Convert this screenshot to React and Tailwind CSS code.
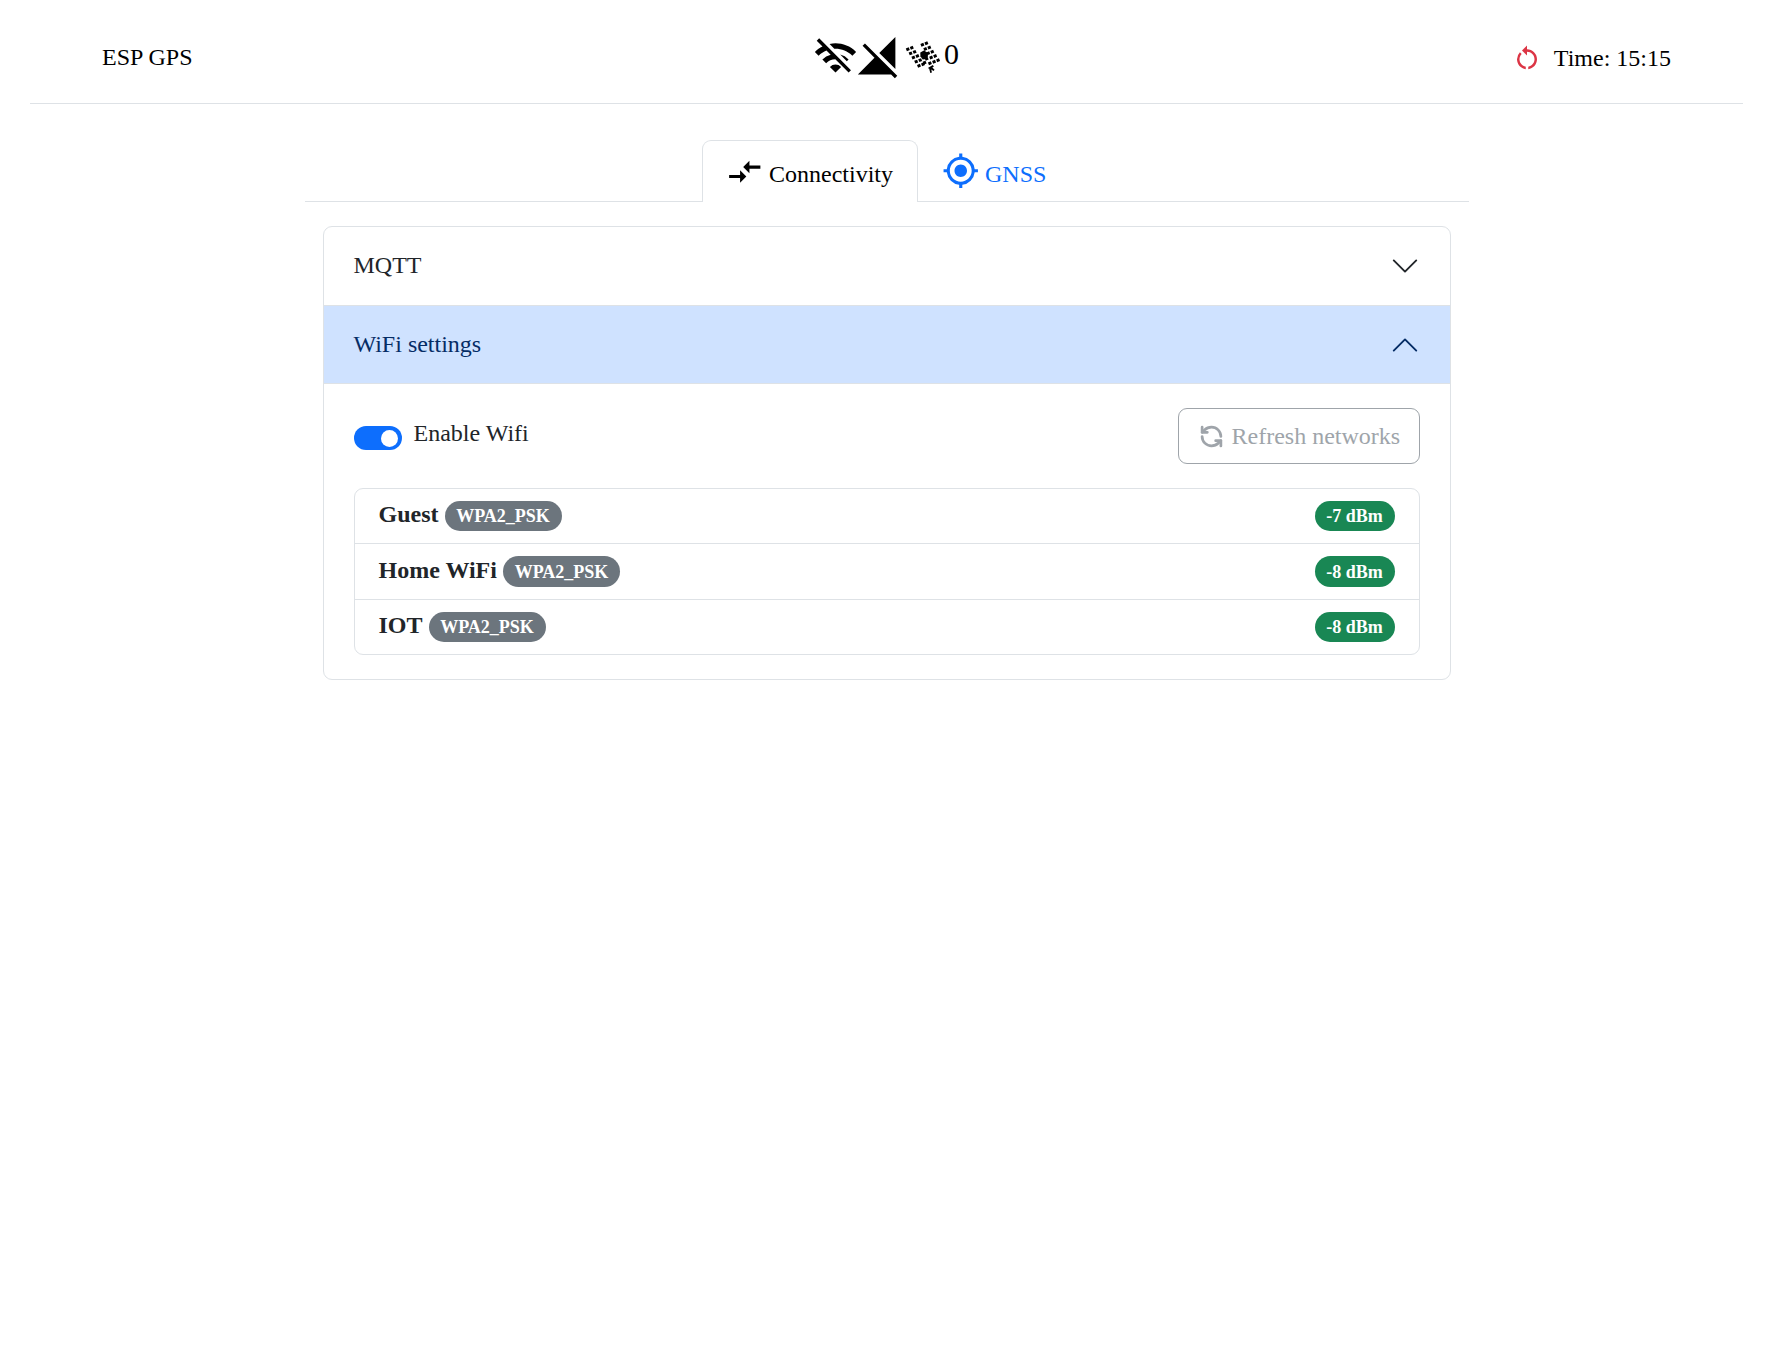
import { MdWifiOff, MdSignalCellularOff, MdCompareArrows, MdGpsFixed, MdRestartAlt } from "react-icons/md";
import { RefreshCcw } from "lucide-react";

const networks = [
  { name: "Guest", auth: "WPA2_PSK", rssi: -7, height: "h-[55px]" },
  { name: "Home WiFi", auth: "WPA2_PSK", rssi: -8, height: "h-[56px]" },
  { name: "IOT", auth: "WPA2_PSK", rssi: -8, height: "h-[54px]" },
];

// Solar cells as centre points: two tilted panels either side of the body.
const cells = [
  ...[0, 1, 2, 3, 4].flatMap((r) => [
    [5.8 + r * 2.8, 14.2 + r * 4.15],
    [9.8 + r * 2.8, 12.7 + r * 4.15],
    [20.4 + r * 2.92, 9.7 + r * 4.25],
    [24.4 + r * 2.92, 8.3 + r * 4.25],
  ]),
  [24.6, 23.8],
  [27.9, 28.2],
  [22.6, 27.6],
];

function Satellite() {
  return (
    <svg className="h-[45px] w-[42px]" viewBox="0 0 42 45" fill="currentColor">
      {cells.map(([x, y]) => (
        <rect key={`${x}-${y}`} x={x - 1.55} y={y - 1.5} width="3.1" height="3" transform={`rotate(-22 ${x} ${y})`} />
      ))}
      <path d="M18.3 17.5l3.6-2 3 1.8 1.2 3.8-1.6 2.8-3.8.6-2.3-3.3z" />
      <path d="M26.2 32.8l4.6-2.9 1.1 1.6-1.6 1.1 2.3 2.1-1.1 1.2-2.2-1.5.6 3-1.6.5-1.2-4.4-.5.3z" />
    </svg>
  );
}

function Chevron({ up }) {
  return (
    <svg viewBox="0 0 16 16" className={up ? "h-[30px] w-[30px] rotate-180 text-[#052c65]" : "h-[30px] w-[30px] text-[#212529]"} fill="none" stroke="currentColor" strokeLinecap="round" strokeLinejoin="round">
      <path d="m2 5 6 6 6-6" />
    </svg>
  );
}

function Badge({ children, className }) {
  return <span className={`inline-block rounded-full px-[11.7px] py-[6.3px] text-center text-[18px] leading-[18px] font-bold text-white ${className}`}>{children}</span>;
}

export default function App() {
  return (
    <div className="min-h-[1359px] bg-white font-['Liberation_Serif',serif] text-[24px] leading-9 text-[#212529]">
      <header className="mx-[30px] grid h-[104px] grid-cols-3 items-start border-b border-[#dee2e6] px-[72px] text-black">
        <div className="mt-[39px]">ESP GPS</div>
        <div className="mt-[35px] flex justify-center pr-px">
          <MdWifiOff className="-mr-[2px] size-[45px] shrink-0" />
          <MdSignalCellularOff className="mr-px size-[45px] shrink-0" />
          <Satellite />
          <span className="text-[30px] leading-[38px]">0</span>
        </div>
        <div className="mt-10 flex items-center justify-end">
          <MdRestartAlt className="mr-3 size-[30px] text-[#dc3545]" />
          <span>Time: 15:15</span>
        </div>
      </header>

      <main className="mx-auto mt-9 w-[1164px]">
        <nav className="flex h-[62px] justify-center border-b border-[#dee2e6]">
          <a className="-mb-px flex h-[62px] w-[216px] rounded-t-[9px] border border-b-0 border-[#dee2e6] bg-white pl-[23px] text-black">
            <MdCompareArrows className="mt-[11.5px] size-[37.5px] shrink-0" />
            <span className="mt-[15px] ml-[5.5px]">Connectivity</span>
          </a>
          <a className="flex w-[153px] pl-6 text-[#0d6efd]">
            <MdGpsFixed className="mt-3 size-[37.5px] shrink-0" />
            <span className="mt-4 ml-[5.5px]">GNSS</span>
          </a>
        </nav>

        <div className="mx-[18px] mt-6 rounded-[9px] border border-[#dee2e6]">
          <div className="flex h-[78px] items-center justify-between px-[30px]">
            <span className="pb-0.5">MQTT</span>
            <Chevron />
          </div>
          <div className="flex h-[79px] items-center justify-between border-y border-[#dee2e6] bg-[#cfe2ff] px-[30px] text-[#052c65]">
            <span className="pb-px">WiFi settings</span>
            <Chevron up />
          </div>
          <div className="px-[30px] pt-6 pb-6">
            <div className="flex h-14 items-start justify-between">
              <div className="flex">
                <span className="mt-[18px] flex h-6 w-12 items-center justify-end rounded-full bg-[#0d6efd] pr-[3.5px]">
                  <span className="size-[17px] rounded-full bg-white" />
                </span>
                <span className="mt-[7px] ml-3">Enable Wifi</span>
              </div>
              <button className="flex h-14 w-[242px] items-center rounded-[9px] border border-[#6c757d] pl-[20px] text-[#6c757d] opacity-65">
                <RefreshCcw className="size-[25px]" strokeWidth={2.6} />
                <span className="ml-2">Refresh networks</span>
              </button>
            </div>
            <ul className="mt-6 divide-y divide-[#dee2e6] rounded-[9px] border border-[#dee2e6]">
              {networks.map((n) => (
                <li key={n.name} className={`flex items-center justify-between px-6 ${n.height}`}>
                  <div className="flex items-baseline gap-1.5 leading-[27px] font-bold">
                    <span>{n.name}</span>
                    <Badge className="bg-[#6c757d]">{n.auth}</Badge>
                  </div>
                  <Badge className="bg-[#198754]">{n.rssi} dBm</Badge>
                </li>
              ))}
            </ul>
          </div>
        </div>
      </main>
    </div>
  );
}
